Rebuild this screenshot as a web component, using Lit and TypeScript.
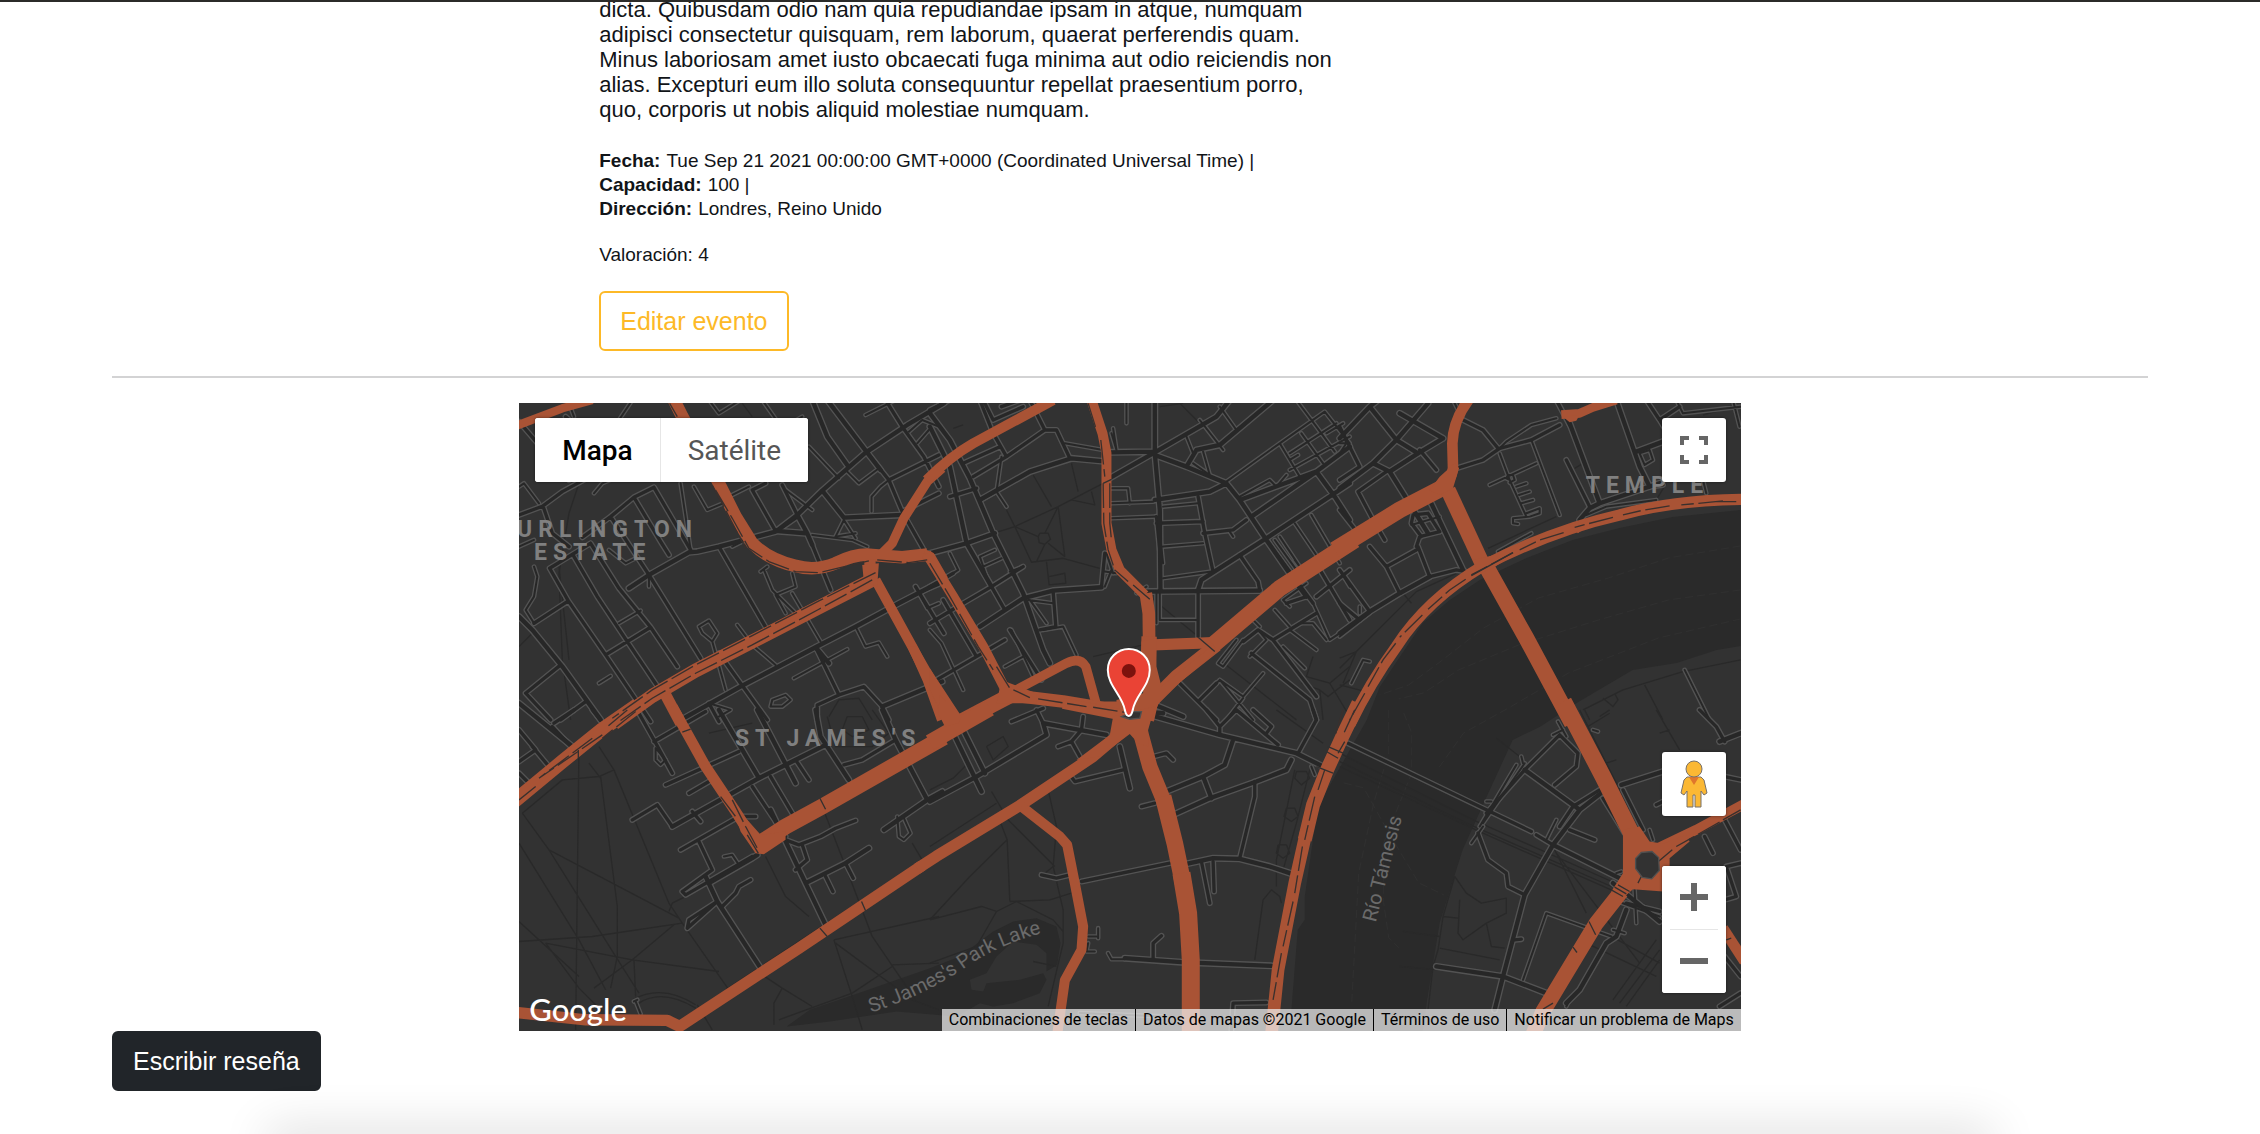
import { LitElement, html, svg, css } from "lit";
import { customElement, state } from "lit/decorators.js";

interface Tile {
  x: number;
  y: number;
  wide: string;
  mid: string;
  thin: string;
  paths: string;
  major: [number, string][];
  shapes: string;
  lanes: string;
  cuts: string;
}

/* Street geometry, three units per map pixel, one entry per tile. */
const TILES: Tile[] = [
  {
    x: 0,
    y: -3,
    wide:
      "M330 565L390 525 510 457 535 455 600 440 770 395 835 345 910 272 1040 158 1165 75 1275 10 M495 955L670 857 890 742 1010 680 1140 610 1275 540 M880 0L925 110 985 195 M925 0L1045 158 1085 210 M0 650L40 690 130 800 245 960 M770 393L860 400 M930 790L890 742 M1090 920L1270 845 M975 353L1150 345 M835 345L865 400 880 435 M975 353L910 272",
    mid:
      "M0 345L72 318 130 275 240 215 M190 412L275 350 345 292 405 262 M45 670L148 603 M260 765L325 725 395 682 M92 505L148 603 260 765 375 935 395 965 M162 465L235 590 325 725 480 955 M215 430L300 565 395 682 475 800 M92 505L215 430 M275 350L390 525 545 775 M345 292L425 425 450 465 M405 262L515 450 M600 440L745 690 M700 270L770 393 M790 255L835 345 M740 250L700 270 M880 435L935 570 M1045 158L1110 240 1150 335 1215 450 M1110 240L1260 165 M890 742L960 885 M670 857L745 960 M600 760L670 857 M570 910L600 965 M960 885L895 915 895 960 M960 885L1035 860 1090 920 1110 960 M0 65L150 240 M140 50L190 95 M72 318L100 400 150 440 M20 880L125 795 M20 880L95 960 M125 960L200 905 M1260 260L1215 170 1150 80 1100 0 M1150 335L1260 280 M1190 560L1275 700",
    thin:
      "M0 440L45 420 M45 500L55 530 45 590 20 630 45 670 M0 260L15 250 60 310 M225 280L250 250 330 215 M300 670L365 632 M240 850L275 828 M390 525L390 560 M485 250L515 450 M525 260L565 330 625 305 M625 305L590 250 M630 290L690 260 M540 680L570 662 595 700 580 725 550 700 540 680 M580 725L590 760 620 870 M655 675L700 735 770 795 M735 510L760 570 830 640 M725 515L745 500 M820 520L830 560 770 585 800 640 M820 580L905 725 M825 835L985 748 M755 920L760 900 800 885 815 900 790 920 755 920 M1010 680L1040 740 1080 728 1105 770 M1040 45L1130 0 M985 215L1020 250 1080 205 M1058 335L1058 290 1085 260 1110 240 M975 360L950 410 M975 360L1010 415 M950 410L1010 400 M880 405L1000 420 1045 440 M1200 580L1260 555 M1200 580L1225 625 1260 610 M570 0L600 40 665 0 M730 0L790 85 M790 85L850 50 M870 140L960 235 M150 10L165 50 M300 60L340 0 M270 450L320 490 350 475 M1170 95L1210 60 1260 80 M1195 130L1230 90 M570 910L635 930 600 950 M800 270L880 330 M680 420L640 440 M790 385L840 350",
    paths:
      "M0 740L40 700 M180 250L150 340 120 520 130 780 155 960 M670 10L700 50 M120 500L150 780 M930 950L960 900 1020 895 1060 960 M1160 490L1260 450",
    major: [
      [25, "M-10 78L130 25 220 0"],
      [38, "M465 0L490 50 595 240 650 350 700 430Q750 480 830 498Q890 515 950 490Q1010 460 1060 465L1150 472 1225 464"],
      [28, "M1080 470L1120 430 1155 355 1225 245 1270 205"],
      [34, "M1053 480L1055 540"],
      [42, "M1065 537L900 622 700 725 530 812 400 888 285 970"],
      [30, "M1070 540L1180 740 1225 830"],
      [28, "M1215 462L1235 470 1275 540"],
      [34, "M440 885L485 970"],
    ],
    shapes: "M1030 495L1080 490 1075 560 1035 545Z M1165 740L1196 740 1243 822 1305 945 1255 965 1212 845Z",
    lanes:
      "M452 10L475 50 M590 270L640 355 690 445 750 485 830 515 900 518 1050 483 M1075 480L1170 488 1225 480 M1070 518L900 603 700 707 530 795 400 870 280 955 M1060 540L900 628 700 735 530 820 400 895 300 965 M580 255L630 350 680 445",
    cuts: "",
  },
  {
    x: 411,
    y: -3,
    wide:
      "M0 40L60 120 120 235 190 400 280 580 340 750 360 790 M150 300L300 215 425 175 530 185 M0 460L110 430 195 400 M675 0L675 160 690 330 692 575 M545 157L670 155 M530 240L670 160 860 50 900 0 M675 165L770 200 890 250 930 300 1010 420 1100 550 1130 590 M675 300L840 275 890 250 M150 680L280 595 370 572 515 562 M770 200L800 150 870 135 1030 0 M650 575L990 572 M805 570L815 540 1010 415 1260 250 M930 300L1160 215 1260 140 M0 80L60 200 110 430 185 560 M965 350L1160 215 1215 290 1260 360 M700 940L600 930 M640 900L760 950",
    mid:
      "M150 0L190 100 230 170 M300 0L345 90 380 90 420 175 M345 90L230 170 130 230 M370 575L378 680 330 690 M240 690L335 840 M185 560L225 630 M20 840L140 770 225 720 M140 770L40 600 M0 560L70 520 M680 370L820 365 M805 290L825 400 850 515 M820 400L910 390 950 360 M930 465L985 545 990 572 M805 575L805 710 M100 190L210 140 M0 670L100 610 185 560 280 500 M60 290L140 265 M215 20L270 0 M0 30L60 0 M515 562L525 460 M1010 420L1150 610 M1160 590L1260 510 M940 725L985 690 1030 720 1160 640 M1030 720L1160 890 M965 760L1140 900 1160 960 M160 0L190 60 280 20 M680 350L690 450 M750 850L860 960 M810 900L860 850 M1165 500L1260 660 M1130 590L1070 610",
    thin:
      "M590 0L590 70 M405 130L520 150 M550 85L560 150 M545 100L560 150 M545 265L595 265 600 310 M545 310L670 305 M545 355L680 350 M700 320L805 310 M700 440L820 430 M700 535L845 515 M200 275L230 320 M155 300L200 275 M200 275L215 170 M60 460L85 510 40 540 M160 500L215 475 M170 530L150 470 195 450 M280 500L240 515 M340 690L400 680 440 765 M370 610L295 600 M300 600L350 670 M245 690L310 830 M225 800L280 770 M0 690L35 730 100 870 M690 580L690 660 805 660 M680 580L680 670 M810 60L880 150 M870 20L920 90 M770 110L790 160 M820 155L840 225 790 190 M1100 0L1160 80 1215 155 M1050 130L1185 35 1260 130 M1080 160L1220 70 M1050 130L1110 230 M1080 210L1260 110 M1115 100L1180 190 M1190 100L1240 70 M1105 165L1080 180 M890 245L1050 130 M900 395L910 410 M1095 370L1170 480 M1145 345L1230 490 M1050 410L1110 500 1095 480 M1035 420L1100 510 M700 490L690 400 M620 580L650 560 M525 515L560 520 M530 460L550 520 M930 290L1020 240 1040 260 1070 225 M1230 510L1260 560 M1150 610L1200 720 1260 680 M1110 670L1150 670 1190 720 M1080 620L1060 600 1130 550 M1035 630L1080 680 M940 720L880 800 865 790 920 720 M820 890L870 840 940 890 1000 820 M870 840L970 960 M890 960L940 895 M1080 690L1160 750 M1060 740L1125 805 M985 690L1010 720 960 770 M960 650L990 680 M545 510L525 560",
    paths:
      "M70 85L100 75 M255 380L385 320 530 245 M310 225L365 320 M425 190L445 275 M385 320L405 470 M385 320L345 400 M255 380L325 410 M330 400L355 400 362 418 345 433 328 428 325 410 330 400 M345 433L320 485 M355 430L405 470 M255 380L305 487 400 475 510 505 M350 485L358 555 408 550 405 520 358 530 M190 400L255 380 M230 330L255 380 M425 300L495 315 485 275 M660 590L750 665 830 730 M750 10L830 90 M870 780L1100 960 M490 770L640 735 M1150 770L1130 830 1200 850 1260 800 M1115 850L1170 870 1195 890 1260 840 M1170 870L1180 960 M1200 850L1260 950 M690 20L760 10",
    major: [
      [30, "M-10 240Q60 170 130 130L260 60 370 0"],
      [30, "M485 0L518 100 530 160 530 370 545 450 570 510 645 585"],
      [38, "M648 580L657 640 658 720"],
      [46, "M658 710L655 800 668 880 650 960"],
      [30, "M-10 460L70 590 160 740 235 885"],
      [28, "M250 875L410 790Q450 770 468 800L500 915"],
      [46, "M60 982L245 885"],
      [38, "M235 885L400 905 580 935"],
      [34, "M670 735L850 728"],
      [40, "M640 930L740 830 860 735"],
      [50, "M850 735L1050 565 1275 420"],
    ],
    shapes:
      "M0 805L95 950 60 975 30 950 20 910 0 870Z M635 725L680 715 680 800 695 860 850 735 860 755 695 895 660 965 560 965 560 900 640 880Z M215 840L320 880 320 910 200 910Z M500 905L600 905 600 960 500 930Z",
    lanes:
      "M475 10L500 90 M513 120L525 230 M520 250L522 370 535 450 555 510 595 545 M0 490L60 590 145 740 190 810 M200 800L240 865 300 893 M325 897L470 920 M490 922L590 938 M540 250L540 370 545 420",
    cuts: "M520 250L545 238 M610 555L660 598 M805 712L855 755",
  },
  {
    x: 821,
    y: -3,
    wide:
      "M0 115L90 20 115 0 M90 20L170 120 235 160 M170 120L100 190 0 265 M170 120L265 10 M100 190L150 215 265 400 M310 115L235 160 150 215 M690 70L780 310 M830 0L900 200 930 260 M750 325L780 310 960 250 M0 700L90 635 180 580 270 530 M180 40L310 115 M890 155L970 125 M270 300L370 510 M720 360L750 325",
    mid:
      "M0 80L60 200 M90 440L140 500 180 580 M140 500L230 450 M270 530L235 440 M270 530L350 510 380 515 M230 440L240 410 300 395 M245 410L215 370 220 345 265 340 300 395 M0 510L90 635 M55 275L100 360 135 420 M55 275L140 215 M370 60L430 90 475 145 M350 205L430 180 M430 180L480 145 575 120 660 75 M0 610L60 660 M0 330L55 400 M920 0L960 60 1020 20 M680 180L750 320 M930 260L970 255 M650 0L690 75 M240 150L290 210 M960 60L1020 160 M60 200L0 240",
    thin:
      "M0 130L20 130 M480 145L500 125 575 75 650 55 M575 120L660 345 M480 160L510 240 560 350 M450 255L590 190 M510 240L500 235 505 225 520 225 525 240 510 248 M530 260L560 250 M538 285L570 275 M545 310L580 300 M560 340L600 325 600 340 570 350 520 355 520 370 535 372 M475 455L575 400 M0 710L90 640 M35 850L70 780 90 785 M1035 810L1110 960 M900 160L930 150 940 180 915 195 900 160 M60 620L60 640 M340 0L370 60 M1180 0L1200 80 M740 345L800 320 950 300 M215 375L300 350 M1010 0L1030 40 1203 20 M1090 240L1100 280 M10 100L20 130 0 160",
    paths:
      "M445 445L650 350 M705 205L730 190 M0 805L50 755 230 575 350 520 M0 775L50 755 10 850 M0 855L95 880 M190 580L215 610 M730 930L850 870 1030 815 1203 780 M915 855L970 960 M790 895L820 920 835 900 825 880 M735 930L750 960 M780 950L810 930 M950 300L980 250 M1090 45L1180 20",
    major: [
      [32, "M390 -5Q340 60 338 130L340 205Q335 240 310 260"],
      [50, "M-15 450L180 330 325 255"],
      [46, "M325 270L425 485"],
      [48, "M440 500L560 715 697 970"],
      [34, "M1215 298Q1000 300 840 345Q640 390 430 498Q260 600 170 740Q90 850 30 975"],
      [26, "M665 44L720 40 760 22 830 0"],
    ],
    shapes:
      "M300 230L345 190 358 205 340 265 300 285 270 270Z M670 50L720 45 710 62 690 67Z M690 375L720 365 735 385 715 400Z M400 480L465 465 490 485 450 510 410 510Z",
    lanes:
      "M1190 305L1130 305 M1150 303L1025 315 M990 318L905 332 850 345 M820 352L705 382 M672 398L600 420 540 450 M520 458L395 525 M378 538L330 570 265 628 M248 645L180 712 M168 730L130 780 85 860 M75 880L30 960",
    cuts: "M395 527L520 458",
  },
  {
    x: 0,
    y: 307,
    wide:
      "M600 0L720 205 M720 205L820 155 920 105 M720 205L460 350 M755 300L860 520 920 645 M715 0L830 220 M560 500L595 575 725 775 M570 520L700 445 715 435 M0 -20L160 110 M1090 0L1130 90 1225 270 M1095 360L1225 270 1270 245 M860 520L980 460 1050 415 M890 0L905 80 990 210",
    mid:
      "M105 40L165 0 M50 120L0 60 M100 50L160 115 M50 120L0 155 M0 190L30 220 M220 0L260 50 M360 10L405 90 460 190 M405 95L560 5 M440 225L660 125 M510 250L570 215 M340 330L415 285 460 350 M520 305L545 335 M485 420L660 320 710 320 M540 395L580 480 490 545 500 555 700 440 M595 575L505 655 510 630 595 575 M610 590L650 550 660 530 695 510 M700 230L800 380 M755 200L820 310 M800 390L840 405 905 380 950 355 1010 332 M850 405L865 450 830 480 M920 500L942 545 M980 460L1003 505 M975 165L1030 150 1130 90 M830 150L870 210 M560 500L570 520 M90 170L40 110",
    thin:
      "M410 115L440 150 425 165 410 150 410 115 M615 440L640 435 660 465 M1135 320L1140 380 1155 390 1175 370 1155 325 M350 875L365 912 M345 875L355 870",
    paths:
      "M10 310L130 210 240 200 285 180 M285 180L240 110 M245 200L295 590 295 740 275 835 M210 160L245 205 M285 180L450 580 490 640 630 840 M0 400L180 690 260 840 M10 310L90 420 290 740 360 850 M90 420L480 625 M0 695L220 680 490 640 M80 700L340 750 600 785 M80 700L180 835 250 905 M465 645L340 750 225 835 M345 750L350 860 M450 605L460 580 520 550 M0 635L180 800 M340 870Q430 820 530 885 M360 880Q430 835 530 895 M535 885L580 960 M620 840L1000 590 M640 850L700 820 M730 795L790 835 880 890 M790 835L765 880 765 945 M945 690L1000 860 1030 960 M945 690L1260 620 M950 700L1180 870 1260 900 M1120 765L1260 760 M780 930L1000 850 1120 770 M985 20L1030 20 1050 60 1000 80 970 60 985 20 M925 20L950 110 1060 110 1110 70 1060 0 M1180 400L1210 450 M740 440L800 560 870 620 M910 290L980 470 1060 680 1190 870 M570 70L700 40 M180 100L170 960",
    major: [
      [42, "M355 -15L250 58 130 155 -15 275"],
      [32, "M460 -10L560 170 650 305 720 415"],
      [48, "M730 395L800 350 910 290 1275 82"],
      [34, "M-10 908L200 930 445 932 482 950 840 715 1030 588 1210 467"],
    ],
    shapes: "M655 335L685 330 725 375 800 365 800 390 735 433 710 430 665 365Z",
    lanes: "M325 0L260 55 M250 75L60 205 M50 230L0 270 M350 5L250 85 M220 85L60 205 M640 270L680 350 715 415 M605 260L650 320",
    cuts: "M490 67L515 58 M903 265L920 298 M1028 575L1040 603 M903 655L925 680 M178 120L178 145 M685 375L718 430",
  },
  {
    x: 411,
    y: 307,
    wide:
      "M0 275L140 200 350 75 340 40 530 75 M100 60L165 190 M75 80L155 245 M660 15L870 75 1100 130 1180 170 M730 315L840 265 980 215 1070 180 1085 150 M710 245L820 200 885 165 910 90 M820 200L845 265 M570 110L600 235 M770 462L850 445 930 447 1020 470 1080 490 M585 745L755 757 1025 768",
    mid:
      "M245 35L340 -5 M320 0L340 40 M460 20L455 60 425 95 385 110 M425 95L450 140 M580 180L435 215 420 195 M670 140L710 130 730 150 M635 290L675 280 M975 215L975 260 930 445 M335 495L380 505 420 495 M455 515L720 460 M815 455L830 530 840 580 M850 455L853 545 M670 745L670 700 695 678 M830 0L870 50 870 75 M870 50L920 0 M920 0L1045 105 M970 0L1025 50 1010 70 M1150 0L1160 30 1105 130 M905 960L910 880 1010 878",
    thin:
      "M475 680L500 680 M505 655L505 685 M475 700L470 725 495 725 M535 730L545 748 585 748 M1145 170L1155 195 M450 910L700 920",
    paths:
      "M0 410L200 280 M185 245L235 330 375 470 M205 320L232 390 240 575 M232 390L120 500 0 630 M0 630L155 590 200 605 260 575 370 630 400 665 M240 575L360 570 425 550 M355 240L380 350 370 470 345 490 M370 470L400 600 400 700 355 890 M0 760L140 710 200 605 M310 755L380 770 M1095 180L1040 450 1040 530 M1140 180L1100 340 1060 480 M1100 185L1130 185 1140 205 1115 225 1095 205 1100 185 M1070 295L1095 295 1105 320 1085 335 1063 320 1070 295 M1045 405L1070 405 1080 430 1060 445 1040 430 1045 405 M975 750L1000 570 1025 540 1050 560 1055 580 M170 110L220 80 235 110 190 150 170 110 M0 240L70 205 110 165 M1040 0L1180 100",
    major: [
      [48, "M0 98L180 -5"],
      [34, "M-38 477L20 439 270 287 490 140 590 55"],
      [30, "M275 290L390 380 412 405 435 520 460 650 455 720 405 812 382 975"],
      [46, "M630 60L660 170 705 280"],
      [50, "M700 260L735 400 762 530"],
      [54, "M755 490L775 610 783 750 783 975"],
      [42, "M1286 -20L1240 75 1192 180 1150 285 1125 390"],
      [38, "M1130 365L1095 520 1045 780 1025 975"],
      [34, "M400 -20L600 20"],
    ],
    shapes:
      "M30 -45L95 20 85 40 45 50 25 10Z M550 20L675 -10 655 60 655 110 625 100 600 72 510 140 440 150 540 75Z",
    lanes:
      "M1240 0L1215 80 M1185 180L1165 240 M1155 260L1125 390 M1118 410L1095 550 M1090 575L1060 710 M1055 730L1030 870",
    cuts: "M1160 170L1210 190 M1195 110L1240 130 M1190 125L1225 145",
  },
  {
    x: 821,
    y: 307,
    wide:
      "M845 225L970 185 M555 555L640 405 720 300 790 245 M490 800L555 555 M465 900L490 800 M290 770L490 800 620 850 M640 405L850 510 M720 300L555 180 M820 520L960 635 M860 600L830 680 800 700 720 840 M1140 95L1203 70 M680 880L720 840",
    mid:
      "M25 100L440 300 575 365 M555 180L440 310 M555 180L660 75 715 130 710 170 645 225 M415 370L445 450 500 490 505 530 555 555 M690 360L765 390 M590 375L640 405 M790 265L855 370 M850 240L910 360 M1095 380L1120 430 M1155 200L1203 210 M1080 0L1130 50 1155 95 M950 285L1000 260 M660 350L700 290 780 240 M1203 460L1160 470 1190 560 1155 570 M525 690L545 688 M1150 320L1203 420 M860 580L960 605 M1203 800L1155 740 M1140 890L1203 850",
    thin:
      "M555 160L430 340 M530 165L420 350 M440 275L455 275 M545 140L550 160 M655 35L680 80 M620 610L550 810 M620 610L815 680 M640 75L670 60 M760 60L775 65 M930 360L940 390 M830 490L845 485 M820 660L855 670 M835 575L960 620 M650 330L620 390 M395 400L430 350 M885 540L890 640 M680 890L690 870",
    paths:
      "M0 130L400 330 850 530 M0 155L380 340 850 545 M0 170L430 370 950 600 M345 500L380 550 425 580 500 565 500 610 440 640 370 690 355 670 360 570 M440 640L455 710 495 715 M300 715L480 750 M345 500L310 620 295 720 280 770 265 900 M310 620L355 625 M470 85L540 140 M720 0L870 300 M950 0L1020 120 M745 50L810 10 M800 160L830 150 M180 770L300 780 M190 665L300 680 M740 700L950 800 M780 660L960 760 M960 70L990 60 M640 410L740 610 M650 430L900 760 M840 880L960 720 M860 890L960 750 M820 870L950 690",
    major: [
      [50, "M672 -25L790 200 875 370"],
      [46, "M845 545L770 640 610 905 580 975"],
      [30, "M945 420L1070 360 1215 282"],
      [32, "M1150 655L1215 755"],
    ],
    shapes:
      "M850 360L900 350 930 395 970 402 1040 375 1050 395 990 445 990 480 970 545 880 538 855 560 815 545 850 490Z",
    lanes: "M1140 337L1010 410 M998 420L950 460 M45 0L10 75 M1203 300L1150 330 M905 500L895 520",
    cuts:
      "M835 525L870 545 M825 532L860 552 M815 540L850 560 M748 635L768 675 M700 712L712 728 M640 880L610 898 M1160 690L1175 685 M-5 130L15 95",
  },
];

const CURRENTS =
  "M1222 143L1150 155 1090 175 1020 195 965 225 920 260 890 282 861 292 M1222 187L1150 197 1080 217 1000 242 940 267 905 290 880 296 M1222 216L1140 235 1050 270 990 305 945 330 920 365 M870 307L870 350 855 400 840 470 833 600 M885 310L893 330 893 370 865 440 865 500 870 535 880 545 M825 380L845 385 870 430 900 480 925 492";

@customElement("event-map")
class EventMap extends LitElement {
  @state() private mode = "map";

  static styles = css`
    :host {
      display: block;
      position: relative;
      overflow: hidden;
      aspect-ratio: 1222 / 628;
      background: #323232;
      font-family: Roboto, "Liberation Sans", sans-serif;
    }
    .canvas { display: block; width: 100%; height: 100%; }
    .water { fill: #2a2a2a; }
    .current { fill: none; stroke: #303030; stroke-width: 1; stroke-dasharray: 8 4; }
    .path { fill: none; stroke: #292929; stroke-width: 4; stroke-linejoin: round; }
    .street { fill: none; stroke-linecap: round; stroke-linejoin: round; }
    .casing { stroke: #535353; }
    .surface { stroke: #272727; }
    .casing.wide { stroke-width: 21; }
    .surface.wide { stroke-width: 13; }
    .casing.mid { stroke-width: 18; }
    .surface.mid { stroke-width: 10; }
    .casing.thin { stroke-width: 14; }
    .surface.thin { stroke-width: 6; }
    .major { fill: none; stroke: #a95335; stroke-linejoin: round; }
    .junction { fill: #a95335; }
    .island { fill: #323232; stroke: #505050; stroke-width: 4; }
    .lane { fill: none; stroke: #3a302d; stroke-width: 4; stroke-dasharray: 74 14; }
    .cut { fill: none; stroke: #33302f; stroke-width: 4; }
    .area { fill: #808080; font-size: 23px; font-weight: 700; letter-spacing: 6px; }
    .water-name { fill: #6b6b6b; font-size: 20px; }
    .pin { fill: #ea4335; stroke: #fff; stroke-width: 2; }
    .pin-dot { fill: #7d120d; }

    button { border: 0; padding: 0; margin: 0; font: inherit; background: #fff; cursor: pointer; }
    .types {
      position: absolute; top: 15px; left: 16px;
      display: flex; height: 64px; border-radius: 3px; overflow: hidden; background: #fff;
      box-shadow: 0 0 3px rgba(0, 0, 0, 0.5);
    }
    .type { padding: 0 27px; font-size: 28px; color: #565656; }
    .type + .type { border-left: 1px solid #e6e6e6; }
    .type[aria-pressed="true"] { color: #000; font-weight: 500; }
    .tools {
      position: absolute; top: 15px; right: 15px; bottom: 38px;
      display: flex; flex-direction: column; width: 64px;
    }
    .tool {
      display: flex; align-items: center; justify-content: center;
      width: 64px; height: 64px; border-radius: 3px;
    }
    .box { border-radius: 3px; background: #fff; box-shadow: 0 0 3px rgba(0, 0, 0, 0.5); }
    .pegman { margin-top: auto; margin-bottom: 50px; }
    .rule { height: 1px; margin: 0 8px; background: #e6e6e6; }
    .zoom .tool { height: 63px; }
    .logo {
      position: absolute; left: 10px; bottom: 3px;
      font: 500 31px/38px Lato, sans-serif; color: #fff; text-decoration: none;
    }
    .legal {
      position: absolute; right: 0; bottom: 0;
      display: flex; height: 22px;
    }
    .legal > * {
      padding: 0 7px; font-size: 16px; line-height: 22px; color: #000; text-decoration: none;
      background: rgba(245, 245, 245, 0.7);
    }
    .legal > * + * { border-left: 1px solid #000; background-clip: padding-box; }
  `;

  private streets(kind: "casing" | "surface") {
    return TILES.map(
      (t) => svg`<g transform="translate(${t.x} ${t.y}) scale(0.33333)">
        <path class="street thin ${kind}" d=${t.thin} />
        <path class="street mid ${kind}" d=${t.mid} />
        <path class="street wide ${kind}" d=${t.wide} />
      </g>`
    );
  }

  render() {
    return html`
      <svg class="canvas" viewBox="0 0 1222 628" preserveAspectRatio="xMidYMid slice" role="img" aria-label="Londres">
        <path class="water" d="M1222 107L1154 114 1101 125 1054 137 1008 155 961 177 931 197 904 220 881 254 861 284 848 317 799 404 786 494 786 517 779 527 771 628 904 628 908 600 921 520 944 447 968 394 994 337 1021 324 1058 300 1114 267 1158 260 1198 247 1222 243Z" />
        <path class="water" transform="translate(411 307) scale(0.33333)" d="M-430 950L-360 900-200 845 0 775 90 740 190 665 250 635 320 625 380 650 392 700 382 765 350 785 350 730 320 705 250 695 200 740 170 790 120 810 125 840 160 845 170 820 270 810 340 790 350 810 330 850 250 880 190 890 150 880 80 920-100 905-300 935Z" />
        <path class="current" d=${CURRENTS} />
        ${TILES.map(
          (t) => svg`<g transform="translate(${t.x} ${t.y}) scale(0.33333)"><path class="path" d=${t.paths} /></g>`
        )}
        ${this.streets("casing")} ${this.streets("surface")}
        ${TILES.map(
          (t) => svg`<g transform="translate(${t.x} ${t.y}) scale(0.33333)">
            ${t.major.map(([w, d]) => svg`<path class="major" stroke-width=${w} d=${d} />`)}
            <path class="junction" d=${t.shapes} />
          </g>`
        )}
        ${TILES.map(
          (t) => svg`<g transform="translate(${t.x} ${t.y}) scale(0.33333)">
            <path class="lane" d=${t.lanes} /><path class="cut" d=${t.cuts} />
          </g>`
        )}
        <path class="island" transform="translate(821 307) scale(0.33333)" d="M905 428L937 425 957 443 959 482 936 507 908 503 888 476 888 446Z" />
        <path class="island" transform="translate(411 -3) scale(0.33333)" d="M610 935L635 935 630 955 600 958 575 950Z" />
        <text class="area" x="179" y="134" text-anchor="end">BURLINGTON</text>
        <text class="area" x="15" y="157">ESTATE</text>
        <text class="area" x="216" y="343">ST JAMES'S</text>
        <text class="area" x="1067" y="90">TEMPLE</text>
        <text class="water-name" transform="translate(857 520) rotate(-76)">Río Támesis</text>
        <path id="lake" fill="none" d="M352 610Q400 595 445 566Q480 540 540 526" />
        <text class="water-name"><textPath href="#lake">St James's Park Lake</textPath></text>
        <path class="pin" d="M610 313C607 313 607 310 606 307C604 293 589 283 589 267A21 21 0 0 1 631 267C631 283 616 293 614 307C613 310 613 313 610 313Z" />
        <circle class="pin-dot" cx="610" cy="268" r="7" />
      </svg>

      <div class="types">
        <button class="type" aria-pressed=${this.mode === "map"} @click=${() => (this.mode = "map")}>Mapa</button>
        <button class="type" aria-pressed=${this.mode === "sat"} @click=${() => (this.mode = "sat")}>Satélite</button>
      </div>

      <div class="tools">
        <button class="tool box" aria-label="Pantalla completa">
          <svg width="28" height="28" viewBox="0 0 28 28" fill="none" stroke="#666" stroke-width="4">
            <path d="M2 9V2H9M19 2H26V9M26 19V26H19M9 26H2V19" />
          </svg>
        </button>
        <button class="tool box pegman" aria-label="Street View">
          <svg width="28" height="48" viewBox="0 0 28 48" fill="#fbb834" stroke="#77706a" stroke-width="1">
            <path d="M7 17H21L24 20 27 33 24 35 21 31V47H15V35H13V47H7V31L4 35 1 33 4 20Z" />
            <path d="M9 17H19L14 25Z" fill="#e0762c" stroke="none" />
            <circle cx="14" cy="9" r="8" />
          </svg>
        </button>
        <div class="zoom box">
          <button class="tool" aria-label="Acercar">
            <svg width="28" height="28" viewBox="0 0 28 28" fill="#666"><path d="M11 0H17V11H28V17H17V28H11V17H0V11H11Z" /></svg>
          </button>
          <div class="rule"></div>
          <button class="tool" aria-label="Alejar">
            <svg width="28" height="28" viewBox="0 0 28 28" fill="#666"><path d="M0 11H28V17H0Z" /></svg>
          </button>
        </div>
      </div>

      <a class="logo" href="#mapa">Google</a>
      <div class="legal">
        <button>Combinaciones de teclas</button>
        <span>Datos de mapas ©2021 Google</span>
        <a href="#terminos">Términos de uso</a>
        <a href="#notificar">Notificar un problema de Maps</a>
      </div>
    `;
  }
}

@customElement("app-root")
class AppRoot extends LitElement {
  static styles = css`
    :host {
      display: flex;
      flex-direction: column;
      box-sizing: border-box;
      min-height: 100vh;
      overflow: hidden;
      border-top: 2px solid #2b2b29;
      background: #fff;
      color: #111418;
      font-family: "Liberation Sans", Arial, sans-serif;
    }
    .page { padding: 0 112px; }
    .column { width: 60%; margin: 0 auto; }
    .event { max-width: 740px; padding-left: 80px; }
    .lead { margin: -5px 0 0; font-size: 22px; line-height: 25px; }
    .facts { margin: 27px 0 0; font-size: 19px; line-height: 24px; }
    .facts div { display: flex; gap: 6px; }
    .facts dt { font-weight: 700; }
    .facts dd { margin: 0; }
    .rating { margin: 22px 0 24px; font-size: 19px; line-height: 24px; }
    .btn {
      box-sizing: border-box;
      height: 60px;
      padding: 0 19px;
      border: 2px solid #212529;
      border-radius: 6px;
      background: #212529;
      color: #fff;
      font: 25px/32px "Liberation Sans", Arial, sans-serif;
      cursor: pointer;
    }
    .btn.outline { border-color: #fdb927; background: #fff; color: #fdb927; }
    .divider { height: 2px; margin: 25px 0; border: 0; background: #d3d3d4; }
    .write { display: block; }
    .dock { width: 76%; height: 20px; margin: auto auto -20px; box-shadow: 0 0 48px 4px rgba(0, 0, 0, 0.16); }
  `;

  render() {
    return html`
      <main class="page">
        <div class="column">
          <article class="event">
            <p class="lead">
              dicta. Quibusdam odio nam quia repudiandae ipsam in atque, numquam adipisci consectetur
              quisquam, rem laborum, quaerat perferendis quam. Minus laboriosam amet iusto obcaecati fuga
              minima aut odio reiciendis non alias. Excepturi eum illo soluta consequuntur repellat
              praesentium porro, quo, corporis ut nobis aliquid molestiae numquam.
            </p>
            <dl class="facts">
              <div><dt>Fecha:</dt><dd>Tue Sep 21 2021 00:00:00 GMT+0000 (Coordinated Universal Time) |</dd></div>
              <div><dt>Capacidad:</dt><dd>100 |</dd></div>
              <div><dt>Dirección:</dt><dd>Londres, Reino Unido</dd></div>
            </dl>
            <p class="rating">Valoración: 4</p>
            <button class="btn outline">Editar evento</button>
          </article>
        </div>
        <hr class="divider" />
        <event-map class="column"></event-map>
        <button class="btn write">Escribir reseña</button>
      </main>
      <div class="dock"></div>
    `;
  }
}
